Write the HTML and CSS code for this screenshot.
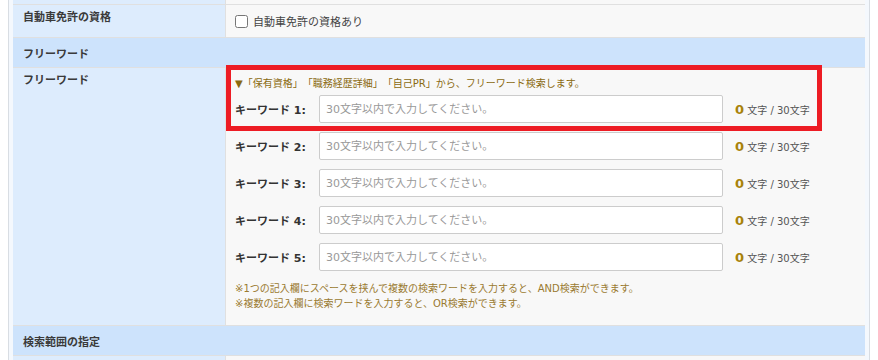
FILE: index.html
```html
<!DOCTYPE html>
<html lang="ja">
<head>
  <meta charset="UTF-8" />
  <title>検索条件</title>
  <link rel="stylesheet" href="styles.css">
</head>
<body>
  <div class="panel">
    <div class="row row-top">
      <div class="th"></div>
      <div class="td"></div>
    </div>

    <div class="row row-license">
      <div class="th">自動車免許の資格</div>
      <div class="td">
        <label class="check"><input type="checkbox"> 自動車免許の資格あり</label>
      </div>
    </div>

    <div class="row head">フリーワード</div>

    <div class="row">
      <div class="th">フリーワード</div>
      <div class="td td-free">
        <div class="highlight"></div>
        <p class="intro">▼「保有資格」「職務経歴詳細」「自己PR」から、フリーワード検索します。</p>
        <div class="keywords">
          <div class="kw"><span class="kw-label">キーワード 1:</span><input type="text" placeholder="30文字以内で入力してください。"><span class="count"><b>0</b> 文字 / 30文字</span></div>
          <div class="kw"><span class="kw-label">キーワード 2:</span><input type="text" placeholder="30文字以内で入力してください。"><span class="count"><b>0</b> 文字 / 30文字</span></div>
          <div class="kw"><span class="kw-label">キーワード 3:</span><input type="text" placeholder="30文字以内で入力してください。"><span class="count"><b>0</b> 文字 / 30文字</span></div>
          <div class="kw"><span class="kw-label">キーワード 4:</span><input type="text" placeholder="30文字以内で入力してください。"><span class="count"><b>0</b> 文字 / 30文字</span></div>
          <div class="kw"><span class="kw-label">キーワード 5:</span><input type="text" placeholder="30文字以内で入力してください。"><span class="count"><b>0</b> 文字 / 30文字</span></div>
        </div>
        <p class="note">※1つの記入欄にスペースを挟んで複数の検索ワードを入力すると、AND検索ができます。</p>
        <p class="note">※複数の記入欄に検索ワードを入力すると、OR検索ができます。</p>
      </div>
    </div>

    <div class="row head">検索範囲の指定</div>

    <div class="row row-top">
      <div class="th"></div>
      <div class="td"></div>
    </div>
  </div>
</body>
</html>
```

FILE: styles.css
```css
body {
  margin: 0;
  font-family: "DejaVu Sans", "Noto Sans CJK JP", sans-serif;
  font-size: 11px;
  color: #333;
  background: #fff;
  text-spacing-trim: space-all;
}
.panel {
  width: 852px;
  margin: -31px 0 0 8px;
  padding: 4px;
  border: 1px solid #d8dde3;
  background: #f4f8fd;
}
.row {
  display: flex;
  border-bottom: 1px solid #e0e0e0;
}
.th {
  width: 213px;
  flex-shrink: 0;
  padding: 4px 10px;
  box-sizing: border-box;
  line-height: 18px;
  font-weight: bold;
  color: #3a3a3a;
  background: #ddecfd;
  border-right: 1px solid #e0e0e0;
}
.td {
  flex: 1;
  background: #f8f8f8;
  padding: 0 9px;
}
.row-top {
  height: 31px;
  box-sizing: border-box;
}
.row-license {
  height: 33px;
  box-sizing: border-box;
}
.row-license .td {
  display: flex;
  align-items: center;
}
.check {
  display: flex;
  align-items: center;
  gap: 2px;
  color: #444;
  font-size: 11px;
}
.check input {
  margin: 1px 3px 0 0;
  width: 13px;
  height: 13px;
}
.head {
  height: 30px;
  box-sizing: border-box;
  align-items: center;
  padding-left: 10px;
  font-weight: bold;
  color: #3a3a3a;
  background: #cde3fc;
}
.td-free {
  position: relative;
  padding: 8px 9px 14px;
}
.highlight {
  position: absolute;
  left: 0;
  top: -3px;
  width: 596px;
  height: 66px;
  box-sizing: border-box;
  border: 5px solid #ed1c24;
}
.intro {
  margin: 0 0 3px;
  line-height: 16px;
  font-size: 10px;
  color: #8a6a10;
}
.keywords {
  display: flex;
  flex-direction: column;
  gap: 9px;
}
.kw {
  display: flex;
  align-items: center;
  height: 28px;
}
.kw-label {
  width: 84px;
  font-weight: bold;
  color: #333;
}
.kw input {
  width: 404px;
  height: 28px;
  box-sizing: border-box;
  border: 1px solid #ccc;
  border-radius: 2px;
  background: #fff;
  padding: 0 6px;
  font-family: inherit;
  font-size: 11px;
}
.kw input::placeholder {
  color: #999;
}
.count {
  margin-left: 12px;
  font-size: 10px;
  color: #555;
}
.count b {
  font-size: 13px;
  color: #a8820a;
}
.note {
  margin: 0;
  line-height: 15px;
  font-size: 10px;
  color: #9a7a30;
}
.keywords + .note {
  margin-top: 10px;
}
```
